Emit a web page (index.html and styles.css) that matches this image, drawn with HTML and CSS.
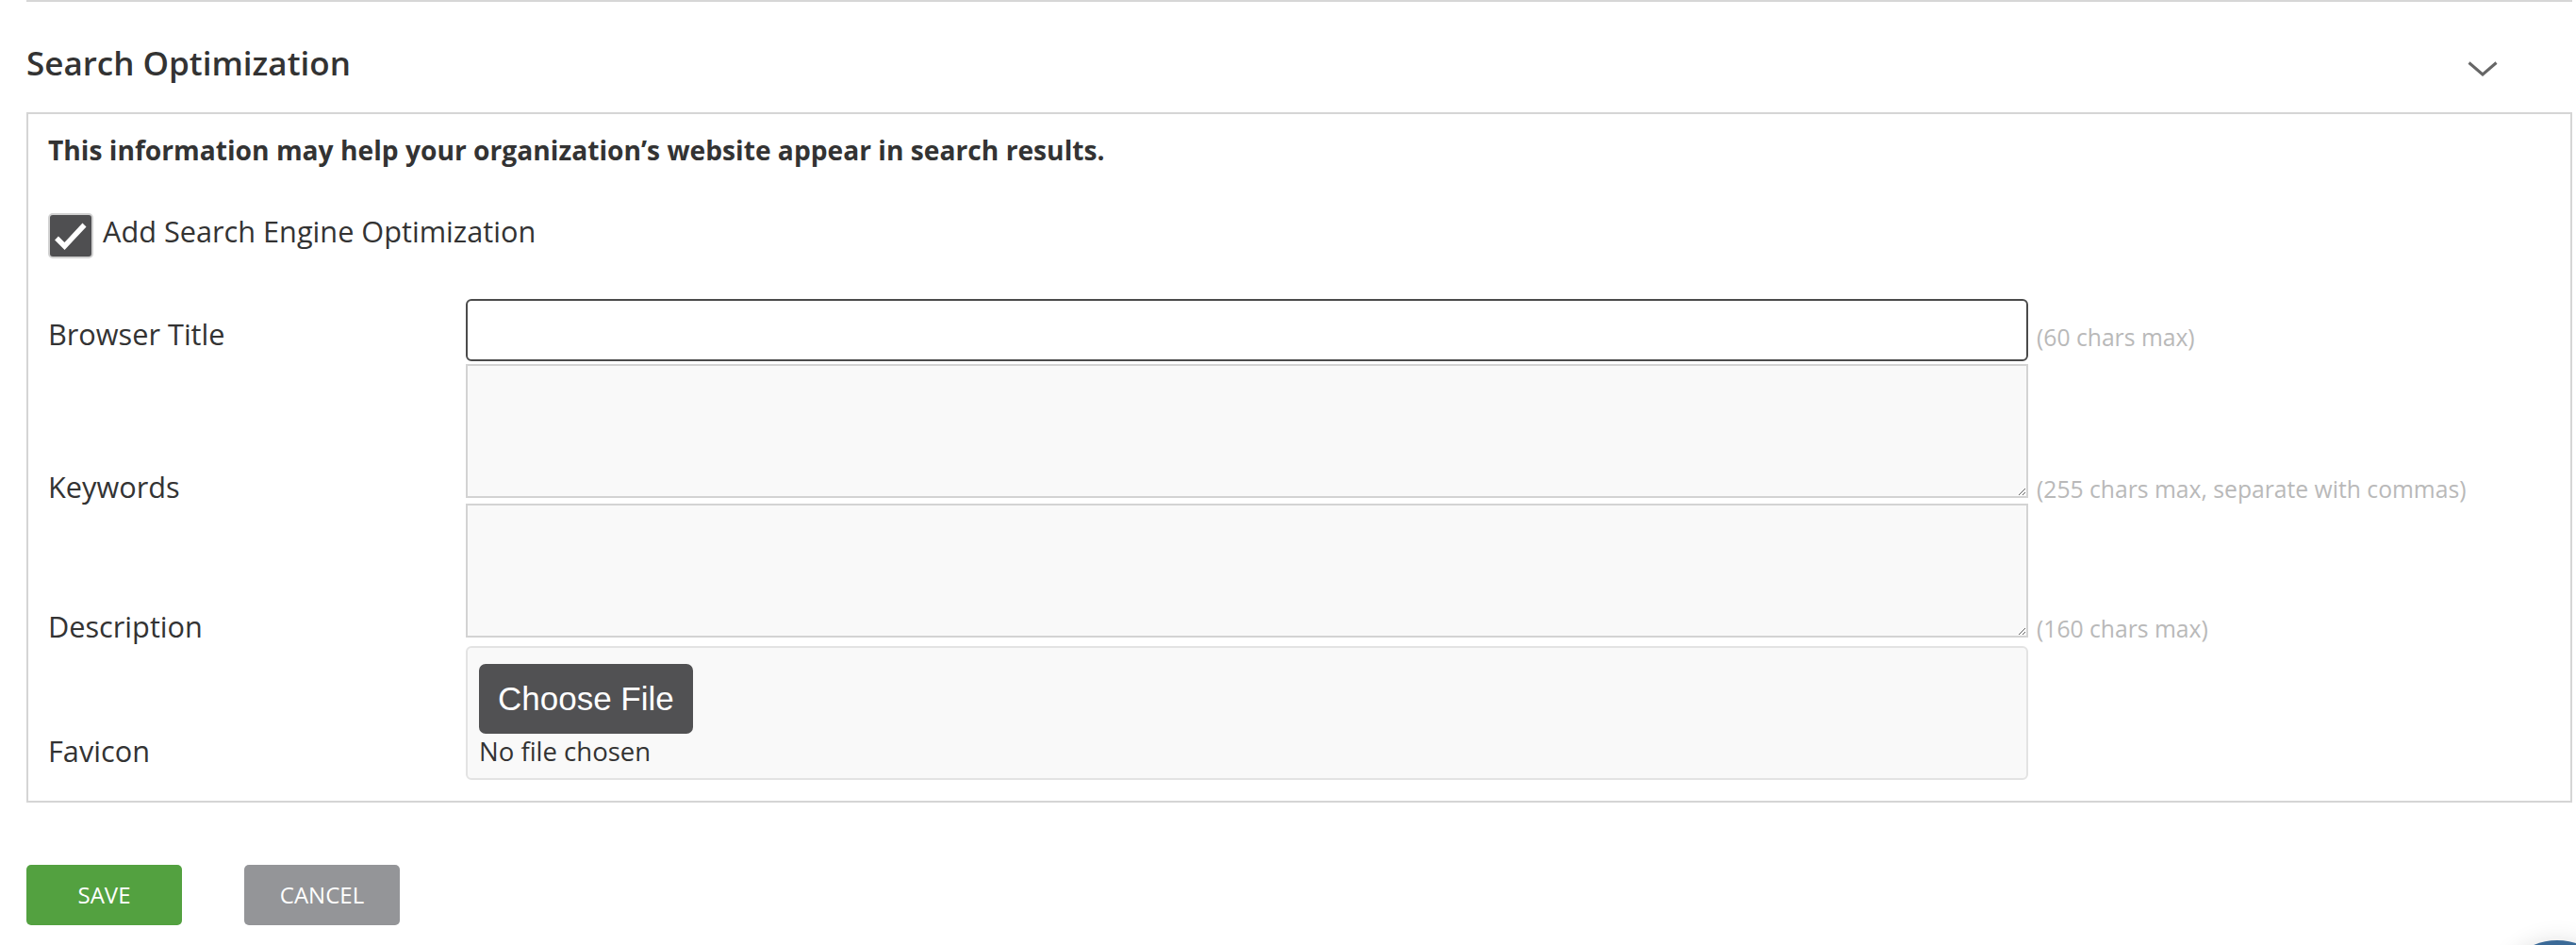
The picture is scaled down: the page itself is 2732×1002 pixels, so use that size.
FILE: index.html
```html
<!DOCTYPE html>
<html lang="en">
<head>
<meta charset="utf-8">
<title>Search Optimization</title>
<link rel="stylesheet" href="styles.css">
</head>
<body>
<div class="page">
  <section class="panel">
    <div class="panel-head">
      <h2 class="panel-title">Search Optimization</h2>
      <svg class="chevron" width="32" height="16" viewBox="0 0 32 16" aria-hidden="true"><path d="M1.5 1.5 L16 14 L30.5 1.5" fill="none" stroke="#666" stroke-width="3"/></svg>
    </div>
    <div class="panel-body">
      <p class="intro">This information may help your organization’s website appear in search results.</p>
      <label class="seo-toggle">
        <span class="check"><svg width="44" height="44" viewBox="0 0 44 44" aria-hidden="true"><path d="M7 24.5 L15.5 33 L36.5 10.5" fill="none" stroke="#fff" stroke-width="5.5"/></svg></span>
        <span class="seo-text">Add Search Engine Optimization</span>
      </label>
      <div class="fields">
        <div class="row">
          <span class="field-label label-mid">Browser Title</span>
          <input class="text-input" type="text">
          <span class="hint hint-mid">(60 chars max)</span>
        </div>
        <div class="row row-keywords">
          <span class="field-label label-low">Keywords</span>
          <textarea class="text-area"></textarea>
          <span class="hint hint-low">(255 chars max, separate with commas)</span>
        </div>
        <div class="row row-description">
          <span class="field-label label-low">Description</span>
          <textarea class="text-area"></textarea>
          <span class="hint hint-low">(160 chars max)</span>
        </div>
        <div class="row row-favicon">
          <span class="field-label label-file">Favicon</span>
          <div class="file-box">
            <button class="file-button" type="button">Choose File</button>
            <div class="file-name">No file chosen</div>
          </div>
          <span class="hint"></span>
        </div>
      </div>
    </div>
  </section>
  <div class="actions">
    <button class="btn btn-save" type="button">SAVE</button>
    <button class="btn btn-cancel" type="button">CANCEL</button>
  </div>
</div>
<div class="chat-bubble"></div>
</body>
</html>
```
FILE: styles.css
```css
* { box-sizing: border-box; }

html, body {
  margin: 0;
  padding: 0;
  background: #fff;
  overflow: hidden;
}

body {
  font-family: "Open Sans", "Liberation Sans", sans-serif;
  color: #333;
}

.page {
  padding: 0 4px 0 28px;
}

.panel {
  border-top: 2px solid #d6d6d6;
}

.panel-head {
  display: flex;
  justify-content: space-between;
  align-items: flex-start;
  padding-bottom: 34px;
}

.panel-title {
  margin: 47px 0 0;
  font-size: 35px;
  line-height: 36px;
  font-weight: 600;
  color: #333;
}

.chevron {
  display: block;
  margin: 63px 79px 0 0;
}

.panel-body {
  border: 2px solid #d5d5d5;
  padding: 24px 0 22px 21px;
}

.intro {
  margin: 0;
  font-size: 28.2px;
  line-height: 28px;
  font-weight: 700;
  color: #333;
}

.seo-toggle {
  display: flex;
  align-items: flex-start;
  margin-top: 53px;
}

.check {
  width: 48px;
  height: 48px;
  border: 2px solid #d2d2d2;
  border-radius: 5px;
  background: #4f4f51;
  display: flex;
  align-items: center;
  justify-content: center;
}

.check svg { display: block; }

.seo-text {
  margin-left: 10px;
  font-size: 30.7px;
  line-height: 38px;
  color: #333;
}

.fields {
  margin-top: 43px;
}

.row {
  display: grid;
  grid-template-columns: 443px 1657px auto;
  align-items: end;
}

.row-keywords { margin-top: 3px; }
.row-description { margin-top: 6px; }
.row-favicon { margin-top: 9px; }

.field-label {
  font-size: 30.7px;
  line-height: 38px;
  color: #333;
}

.label-mid { padding-bottom: 10px; }
.label-low { margin-bottom: -7px; }
.label-file { padding-bottom: 12px; }

.text-input {
  display: block;
  width: 100%;
  height: 66px;
  border: 2px solid #4b4b4b;
  border-radius: 6px;
  background: #fff;
  font: 28px "Open Sans", sans-serif;
  padding: 0 12px;
  outline: none;
}

.text-area {
  display: block;
  width: 100%;
  height: 142px;
  border: 2px solid #d3d3d3;
  border-radius: 0;
  background: #f9f9f9;
  font: 28px "Open Sans", sans-serif;
  margin: 0;
  padding: 8px 12px;
  outline: none;
}

.hint {
  margin-left: 9px;
  font-size: 24.7px;
  line-height: 24px;
  color: #b9b9b9;
  white-space: nowrap;
}

.hint-mid { padding-bottom: 13px; }
.hint-low { margin-bottom: -3px; }

.file-box {
  height: 142px;
  border: 2px solid #e3e3e3;
  border-radius: 6px;
  background: #f9f9f9;
  padding: 17px 12px 10px;
}

.file-button {
  display: block;
  height: 74px;
  padding: 0 20px;
  border: none;
  border-radius: 7px;
  background: #515153;
  color: #fff;
  font-family: "Liberation Sans", Arial, sans-serif;
  font-size: 35px;
  line-height: 74px;
}

.file-name {
  margin-top: 1px;
  font-size: 27.5px;
  line-height: 36px;
  color: #333;
}

.actions {
  display: flex;
  gap: 66px;
  margin-top: 66px;
}

.btn {
  width: 165px;
  height: 64px;
  border: none;
  border-radius: 5px;
  color: #fff;
  font-family: "Open Sans", sans-serif;
  font-size: 24px;
  line-height: 64px;
  padding: 0;
  text-align: center;
}

.btn-save { background: #53a140; }
.btn-cancel { background: #949598; }

.chat-bubble {
  position: fixed;
  left: 2647px;
  top: 997px;
  width: 130px;
  height: 130px;
  border-radius: 50%;
  background: #3b6a97;
  box-shadow: 0 0 24px rgba(0, 0, 0, 0.12);
}
```
